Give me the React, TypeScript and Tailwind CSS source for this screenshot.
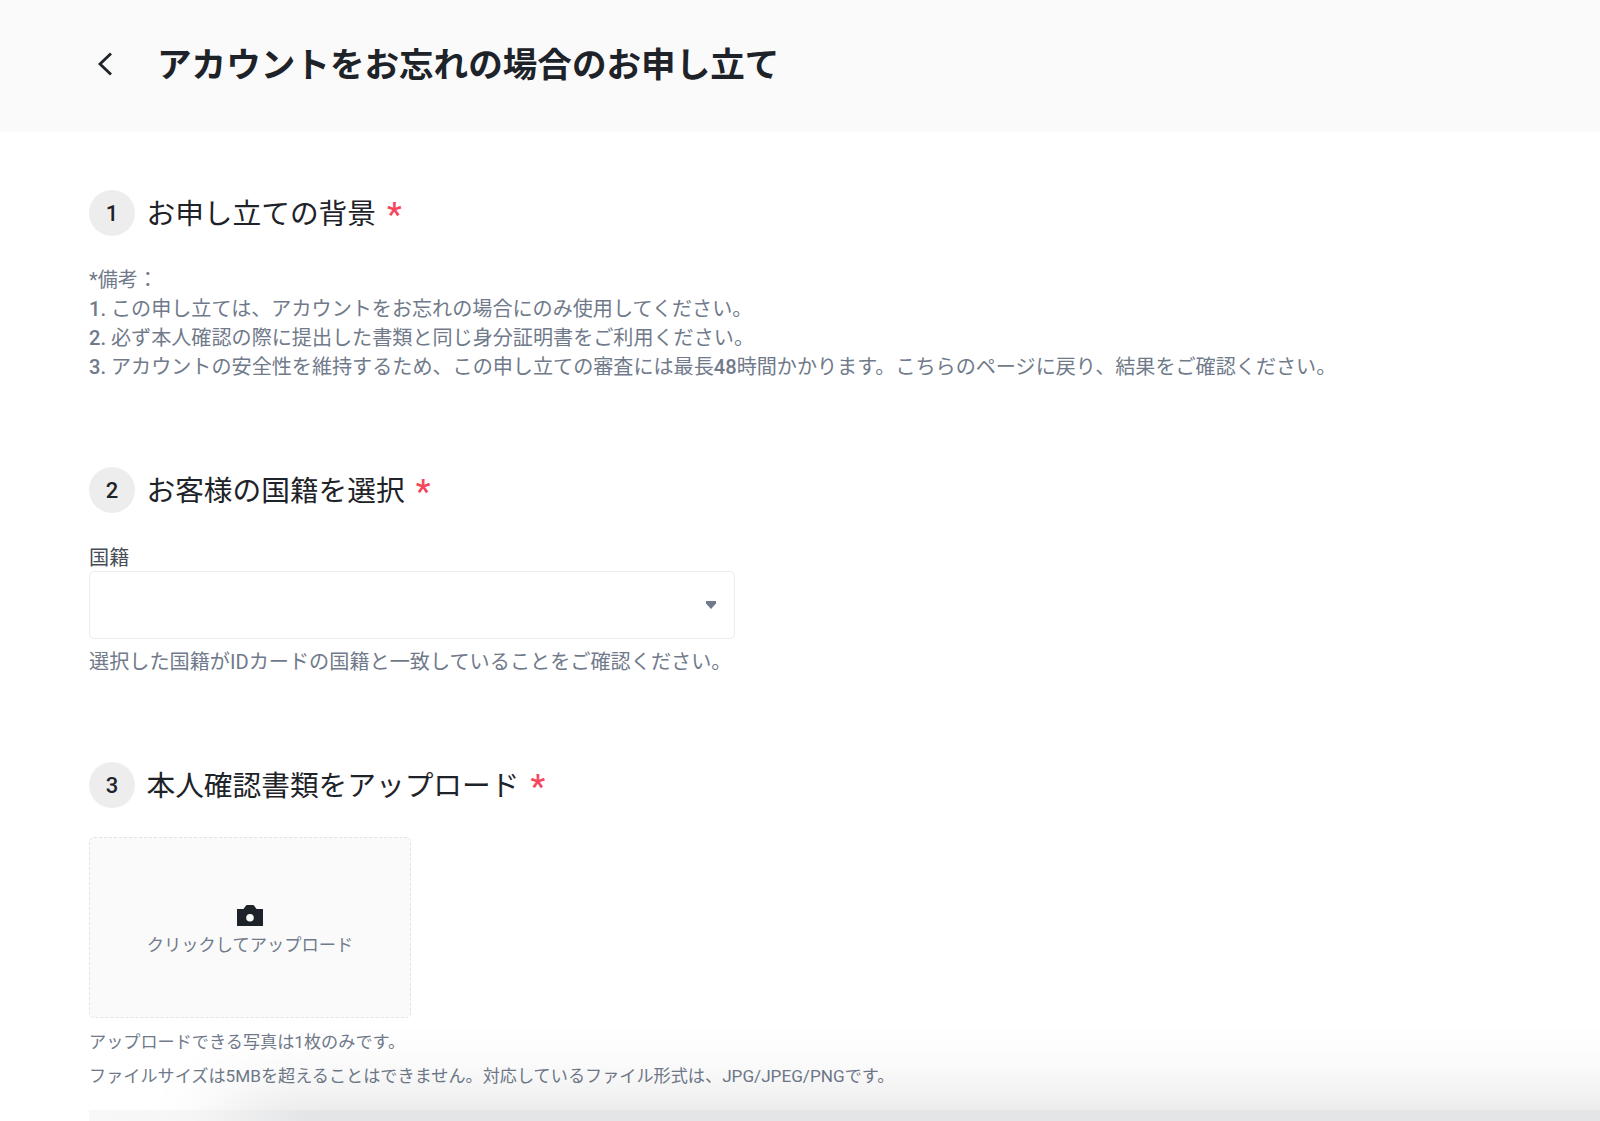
const font = "font-['Roboto','Noto_Sans_CJK_JP',sans-serif]";

function Step({ n, title, className }: { n: number; title: string; className: string }) {
  return (
    <div className={`flex items-center ${className}`}>
      <div className="flex h-[46px] w-[46px] items-center justify-center rounded-full bg-[#ededed] text-[22px] font-medium text-[#1e2329]">
        {n}
      </div>
      <h2 className="ml-[11.5px] pt-[2px] text-[28.7px] leading-[44px] font-normal text-[#1e2329]">{title}</h2>
      <span className="ml-[11px] translate-y-[2px] text-[33px] leading-[46px] font-medium text-[#f6465d]">*</span>
    </div>
  );
}

function Camera() {
  return (
    <svg viewBox="0 0 26 21" className="h-[21px] w-[26px]" aria-hidden="true">
      <path fill="#1e2329" fillRule="evenodd" d="M0 4h6.5L9 .5 10 0h6l1 .5L19.500 4H26v17H0V4Zm13 5a3.800 3.800 0 1 0 0 7.600A3.800 3.800 0 0 0 13 9Z" />
    </svg>
  );
}

export default function App() {
  return (
    <div className={`relative h-[1121px] w-[1600px] overflow-hidden bg-white ${font}`}>
      <header className="flex h-[132px] items-center bg-[#fafafa] pb-0.5 pl-[97px]">
        <svg viewBox="0 0 16 24" className="mb-[2px] h-6 w-4" fill="none" stroke="#1e2329" strokeWidth="2.8" aria-hidden="true">
          <path d="M14 1.5 3 12l11 10.5" />
        </svg>
        <h1 className="ml-[44px] text-[34.6px] leading-none font-bold text-[#1e2329]">
          アカウントをお忘れの場合のお申し立て
        </h1>
      </header>

      <main className="px-[89px]">
        <Step n={1} title="お申し立ての背景" className="mt-[58px]" />
        <div className="mt-[30px] text-[20.1px] leading-[29px] text-[#707a8a]">
          <p>*備考：</p>
          <p><b className="font-medium">1.</b> この申し立ては、アカウントをお忘れの場合にのみ使用してください。</p>
          <p><b className="font-medium">2.</b> 必ず本人確認の際に提出した書類と同じ身分証明書をご利用ください。</p>
          <p><b className="font-medium">3.</b> アカウントの安全性を維持するため、この申し立ての審査には最長<b className="font-medium">48</b>時間かかります。こちらのページに戻り、結果をご確認ください。</p>
        </div>

        <Step n={2} title="お客様の国籍を選択" className="mt-[85px]" />
        <label className="mt-[33px] block text-[20.15px] leading-[25px] text-[#474d57]">国籍</label>
        <div className="flex h-[68px] w-[646px] items-center justify-end rounded-[5px] border border-[#eaecef] bg-white pr-[18px]">
          <svg viewBox="0 0 10 8" className="h-2 w-2.5" aria-hidden="true">
            <path fill="#707a8a" d="M0 0h10v2.5L5 8 0 2.5V0Z" />
          </svg>
        </div>
        <p className="mt-[9px] text-[20.15px] leading-[29px] text-[#707a8a]">選択した国籍がIDカードの国籍と一致していることをご確認ください。</p>

        <Step n={3} title="本人確認書類をアップロード" className="mt-[85px]" />
        <div className="mt-[29px] flex h-[181px] w-[322px] flex-col items-center justify-center rounded-[5px] border border-dashed border-[#e2e4e6] bg-[#fafafa] pt-2">
          <Camera />
          <span className="mt-[6px] text-[17.25px] leading-[26px] text-[#707a8a]">クリックしてアップロード</span>
        </div>
        <p className="mt-[11px] text-[17.15px] leading-[26px] text-[#707a8a]">アップロードできる写真は1枚のみです。</p>
        <p className="mt-[8px] text-[17.15px] leading-[26px] text-[#707a8a]">ファイルサイズは5MBを超えることはできません。対応しているファイル形式は、JPG/JPEG/PNGです。</p>
      </main>

      <div className="absolute top-[1110px] right-[-100px] left-[226px] h-[100px] shadow-[0_0_86px_rgba(0,0,0,0.15)]" />
      <div className="absolute right-0 bottom-0 left-[89px] h-[11px] bg-[linear-gradient(90deg,#f8f8f8_0,#f6f6f6_100px,#e4e5e7_220px)]" />
    </div>
  );
}
